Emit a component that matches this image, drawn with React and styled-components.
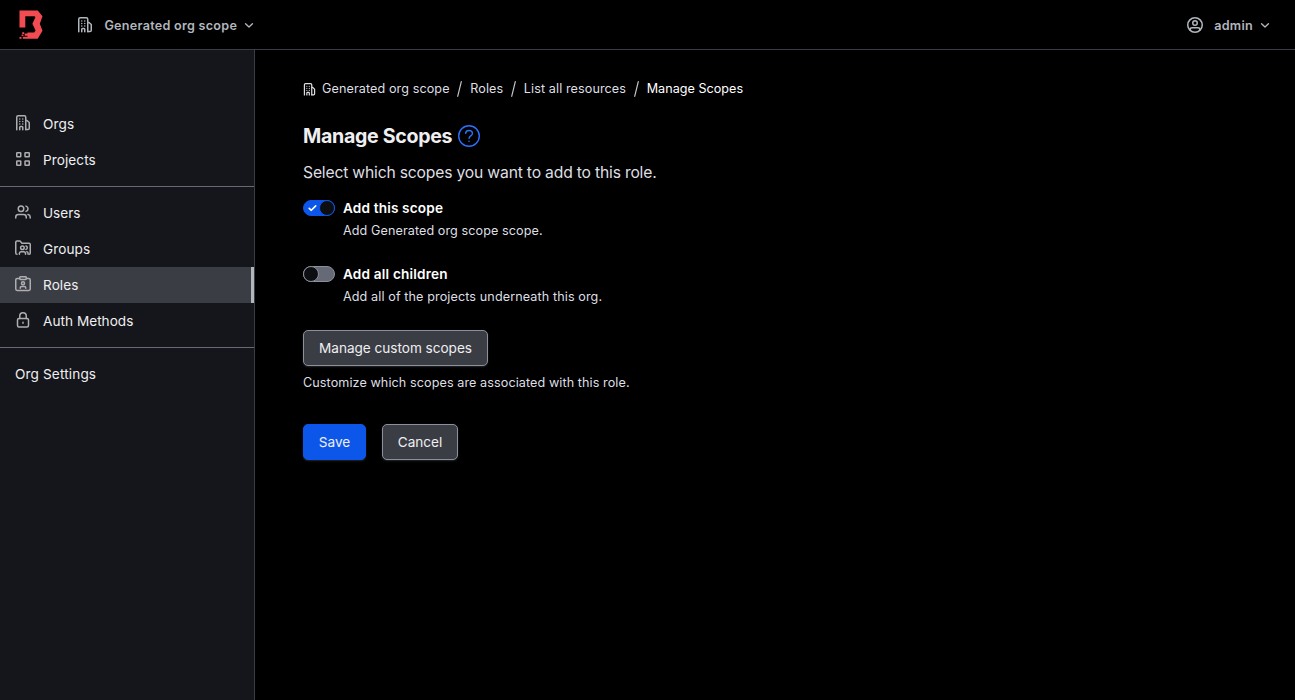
import React from "react";
import styled, { createGlobalStyle } from "styled-components";

const GlobalStyle = createGlobalStyle`
  * { box-sizing: border-box; }
  body {
    margin: 0;
    background: #000;
    color: #efeff1;
    font-family: Inter, "Liberation Sans", sans-serif;
    font-size: 13.6px;
  }
  h1, p, ul, ol { margin: 0; padding: 0; }
  li { list-style: none; }
`;

const Svg = styled.svg`
  display: block;
  flex: none;
  fill: none;
  stroke: currentColor;
  stroke-width: ${(p) => p.$stroke || 1.5};
  stroke-linecap: round;
  stroke-linejoin: round;
`;

const Icon = ({ size = 16, stroke, children }) => (
  <Svg width={size} height={size} viewBox="0 0 16 16" $stroke={stroke}>
    {children}
  </Svg>
);

const OrgIcon = (props) => (
  <Icon {...props}>
    <path d="M1.75 14.75V2.25c0-.8.6-1.5 1.4-1.5h6.2c.8 0 1.4.7 1.4 1.5v12.5" />
    <path d="M11 5.5h1l2.25 2v5.75c0 .8-.5 1.25-1.25 1.25h-2" />
    <path d="M4.75 14.75v-2.5c0-.5.3-.75.75-.75H7c.5 0 .75.25.75.75v2.5" />
    <path d="M4.75 4h.01M7.75 4h.01M4.75 6.5h.01M7.75 6.5h.01M4.75 9h.01M7.75 9h.01" />
  </Icon>
);

const GridIcon = (props) => (
  <Icon {...props}>
    <rect x="1.75" y="1.75" width="4" height="4" rx=".5" />
    <rect x="10" y="1.75" width="4.25" height="4" rx=".5" />
    <rect x="1.75" y="10" width="4" height="4.25" rx=".5" />
    <rect x="10" y="10" width="4.25" height="4.25" rx=".5" />
  </Icon>
);

const UsersIcon = (props) => (
  <Icon {...props}>
    <circle cx="6" cy="4.75" r="2.75" />
    <path d="M.75 14v-1c0-1.5 1.2-2.5 2.7-2.5h5.1c1.5 0 2.7 1 2.7 2.5v1" />
    <path d="M11 2.1a2.75 2.75 0 0 1 0 5.3M13 10.6c1.3.3 2.2 1.2 2.2 2.4v1" />
  </Icon>
);

const FolderUsersIcon = (props) => (
  <Icon {...props}>
    <path d="M2 14.25c-.8 0-1.25-.5-1.25-1.25V2.25C.75 1.5 1.2 1 2 1h3l2 2.25h7c.8 0 1.25.5 1.25 1.25V13c0 .75-.4 1.25-1 1.25" />
    <circle cx="7.4" cy="7.7" r="1.8" />
    <path d="M4.4 14.2v-.7c0-1.2.8-1.8 1.8-1.8h2.5c1 0 1.8.6 1.8 1.8v.7M10.9 5.9a1.8 1.8 0 0 1 0 3.5M11.8 11.7c.8.2 1.3.8 1.3 1.8v.7" />
  </Icon>
);

const BadgeIcon = (props) => (
  <Icon {...props}>
    <path d="M4.5 2.5H2.2c-.9 0-1.45.6-1.45 1.4v9.2c0 .8.6 1.4 1.45 1.4h11.6c.9 0 1.45-.6 1.45-1.4V3.9c0-.8-.6-1.4-1.45-1.4h-2.3" />
    <rect x="4.75" y=".75" width="6.5" height="2.75" rx=".7" />
    <circle cx="8" cy="7.2" r="1.5" />
    <path d="M5.25 12.2v-.4c0-.9.7-1.4 1.5-1.4h2.5c.8 0 1.5.5 1.5 1.4v.4" />
  </Icon>
);

const LockIcon = (props) => (
  <Icon {...props}>
    <rect x="2.5" y="6.5" width="11" height="8.5" rx="1.5" />
    <path d="M4.75 6.5V4.1a3.25 3.25 0 0 1 6.5 0v2.4M8 10.2v1" />
  </Icon>
);

const UserCircleIcon = (props) => (
  <Icon {...props}>
    <circle cx="8" cy="8" r="7.25" />
    <circle cx="8" cy="6" r="2.25" />
    <path d="M3.25 13v-.6c0-1 .7-1.65 1.7-1.65h6.1c1 0 1.7.65 1.7 1.65v.6" />
  </Icon>
);

const ChevronIcon = (props) => (
  <Icon {...props}>
    <path d="M3.4 6.4 8 10.8 12.6 6.4" />
  </Icon>
);

const HelpIcon = () => (
  <Svg width="22" height="22" viewBox="0 0 22 22" $stroke={1.4}>
    <circle cx="11" cy="11" r="10.3" />
    <path d="M7.6 8.3C7.8 6.6 9.2 5.5 11 5.5c1.9 0 3.4 1.2 3.4 2.9 0 2.4-3.3 2.5-3.3 4.9M11 16.3v.1" />
  </Svg>
);

const CheckIcon = () => (
  <Svg width="9" height="8" viewBox="0 0 9 8" $stroke={1.6}>
    <path d="M1.2 4.3 3.3 6.3 7.7 1.9" />
  </Svg>
);

const Logo = () => (
  <svg width="24" height="29" viewBox="0 0 24 29">
    <path
      fill="#f24c53"
      d="M.5 .5H18.7L23.5 6.3 20.8 13.8 23.5 20.8 18.7 28.7H8.5V22.5H15.2L16.6 20.6 13.4 13.8 16.4 7.2 15.6 6.3H6.3V17.5H.5ZM3.2 22.2h2v1.8h-2ZM5.7 23.5h2.8v2.2H5.7ZM2.6 24.5h1.8v1.6H2.6ZM.5 27h2v1.7H.5ZM3.8 26.7h4.7v2H3.8Z"
    />
  </svg>
);

const Page = styled.div`
  display: grid;
  grid-template: 50px 650px / 255px 1fr;
`;

const Header = styled.header`
  grid-column: 1 / -1;
  display: flex;
  align-items: center;
  justify-content: space-between;
  padding: 0 24px 0 19px;
  border-bottom: 1px solid #3b3d45;
  color: #b2b6bd;
`;

const HeaderGroup = styled.div`
  display: flex;
  align-items: center;
`;

const Menu = styled.div`
  display: flex;
  align-items: center;
  margin-left: ${(p) => p.$offset || 0}px;
`;

const MenuLabel = styled.span`
  margin: 3px 6px 0 11.4px;
  font-size: 12.6px;
  font-weight: 600;
  line-height: 20px;
  letter-spacing: 0.27px;
`;

const Sidebar = styled.nav`
  display: flex;
  flex-direction: column;
  padding-top: 56px;
  background: #15161b;
  border-right: 1px solid #3b3d45;
`;

const NavList = styled.ul`
  & + & {
    margin-top: 8px;
    padding-top: 8px;
    border-top: 1px solid #656a76;
  }
`;

const NavItem = styled.li`
  display: flex;
  align-items: center;
  gap: 12px;
  height: 36px;
  padding: 0 15px;
  line-height: 18px;
  color: #efeff1;
  background: ${(p) => (p.$active ? "#3b3d45" : "transparent")};
  border-right: 3px solid ${(p) => (p.$active ? "#b2b6bd" : "transparent")};
  letter-spacing: ${(p) => p.$track || 0.08}px;

  svg {
    margin-top: -2px;
    color: #aeaeb1;
  }
`;

const Main = styled.main`
  padding: 28px 48px;
`;

const Breadcrumb = styled.ol`
  display: flex;
  align-items: center;
  height: 22px;
  font-size: 12.6px;
  color: #dedfe3;
`;

const Crumb = styled.li`
  display: flex;
  align-items: center;
  gap: 6px;
  line-height: 20px;
  letter-spacing: ${(p) => p.$track || 0.1}px;
  color: ${(p) => (p.$current ? "#fff" : "inherit")};
`;

const Separator = styled.li`
  display: flex;
  margin: 0 7.8px;
  color: #c2c5cb;
`;

const TitleRow = styled.div`
  display: flex;
  align-items: center;
  gap: 6px;
  height: 28px;
  margin-top: 22px;

  svg {
    color: #2b71ff;
  }
`;

const Title = styled.h1`
  font-size: 19.6px;
  font-weight: 700;
  line-height: 28px;
  letter-spacing: -0.31px;
`;

const Intro = styled.p`
  margin-top: 11px;
  font-size: 15.7px;
  line-height: 24px;
  color: #dedfe3;
  letter-spacing: -0.19px;
`;

const Field = styled.div`
  display: flex;
  gap: 8px;
  margin-top: ${(p) => p.$top}px;
`;

const Toggle = styled.div`
  display: flex;
  align-items: center;
  flex: none;
  width: 32px;
  height: 16px;
  margin-top: 2px;
  border-radius: 8px;
  justify-content: ${(p) => (p.$on ? "space-between" : "flex-start")};
  padding-left: ${(p) => (p.$on ? 3.5 : 0)}px;
  border: 1px solid ${(p) => (p.$on ? "#0c56e9" : "#8c909c")};
  background: ${(p) => (p.$on ? "#0c56e9" : "#656a76")};
  color: #fff;
`;

const Knob = styled.span`
  width: 16px;
  height: 16px;
  margin: 0 -1px;
  border-radius: 50%;
  background: #0d0e12;
  border: 1px solid ${(p) => (p.$on ? "#0c56e9" : "#8c909c")};
`;

const FieldText = styled.div`
  display: flex;
  flex-direction: column;
  gap: 4px;
`;

const Label = styled.span`
  font-weight: 600;
  line-height: 20px;
  color: #fff;
  letter-spacing: ${(p) => p.$track}px;
`;

const Helper = styled.p`
  font-size: 12.6px;
  line-height: 18px;
  color: #dedfe3;
  margin-top: ${(p) => p.$top || 0}px;
  letter-spacing: ${(p) => p.$track}px;
`;

const Actions = styled.div`
  display: flex;
  gap: 16px;
  margin-top: ${(p) => p.$top}px;
`;

const Button = styled.button`
  width: ${(p) => p.$width}px;
  height: 36px;
  padding: 0 0 1px;
  border-radius: 5px;
  font: inherit;
  line-height: 18px;
  color: #efeff1;
  letter-spacing: -0.02px;
  border: 1px solid ${(p) => (p.$primary ? "#0c56e9" : "#8c909c")};
  background: ${(p) => (p.$primary ? "#0c56e9" : "#3b3d45")};
  box-shadow: 0 1px 2px rgba(101, 106, 118, 0.35);
`;

const Slash = () => (
  <Separator>
    <Svg width="5" height="16" viewBox="0 0 5 16" $stroke={1.2}>
      <path d="M4.3 .7 .7 15.3" />
    </Svg>
  </Separator>
);

export default function App() {
  return (
    <>
      <GlobalStyle />
      <Page>
        <Header>
          <HeaderGroup>
            <Logo />
            <Menu $offset={34}>
              <OrgIcon />
              <MenuLabel>Generated org scope</MenuLabel>
              <ChevronIcon size={12} stroke={1.8} />
            </Menu>
          </HeaderGroup>
          <Menu>
            <UserCircleIcon />
            <MenuLabel>admin</MenuLabel>
            <ChevronIcon size={12} stroke={1.8} />
          </Menu>
        </Header>

        <Sidebar>
          <NavList>
            <NavItem $track={0.12}><OrgIcon />Orgs</NavItem>
            <NavItem><GridIcon />Projects</NavItem>
          </NavList>
          <NavList>
            <NavItem $track={-0.01}><UsersIcon />Users</NavItem>
            <NavItem><FolderUsersIcon />Groups</NavItem>
            <NavItem $active><BadgeIcon />Roles</NavItem>
            <NavItem $track={0.03}><LockIcon />Auth Methods</NavItem>
          </NavList>
          <NavList>
            <NavItem $track={0.14}>Org Settings</NavItem>
          </NavList>
        </Sidebar>

        <Main>
          <Breadcrumb>
            <Crumb><OrgIcon size={13} />Generated org scope</Crumb>
            <Slash />
            <Crumb>Roles</Crumb>
            <Slash />
            <Crumb>List all resources</Crumb>
            <Slash />
            <Crumb $current $track={0.03}>Manage Scopes</Crumb>
          </Breadcrumb>

          <TitleRow>
            <Title>Manage Scopes</Title>
            <HelpIcon />
          </TitleRow>
          <Intro>Select which scopes you want to add to this role.</Intro>

          <Field $top={13}>
            <Toggle $on>
              <CheckIcon />
              <Knob $on />
            </Toggle>
            <FieldText>
              <Label $track={0.16}>Add this scope</Label>
              <Helper $track={0.09}>Add Generated org scope scope.</Helper>
            </FieldText>
          </Field>
          <Field $top={24}>
            <Toggle>
              <Knob />
            </Toggle>
            <FieldText>
              <Label $track={0.19}>Add all children</Label>
              <Helper $track={0.11}>Add all of the projects underneath this org.</Helper>
            </FieldText>
          </Field>

          <Actions $top={24}>
            <Button $width={185}>Manage custom scopes</Button>
          </Actions>
          <Helper $top={8} $track={0.09}>Customize which scopes are associated with this role.</Helper>

          <Actions $top={32}>
            <Button $primary $width={63}>Save</Button>
            <Button $width={76}>Cancel</Button>
          </Actions>
        </Main>
      </Page>
    </>
  );
}
